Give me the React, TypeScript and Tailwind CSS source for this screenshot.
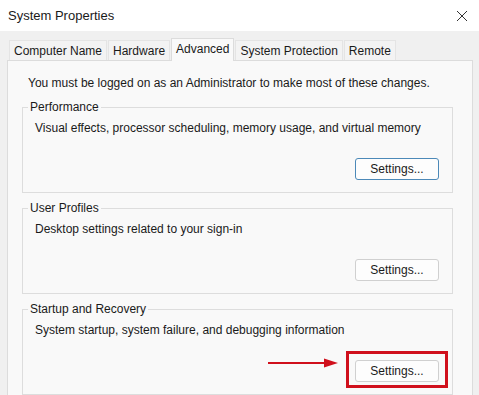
const tabs = ["Computer Name", "Hardware", "Advanced", "System Protection", "Remote"];

type GroupProps = {
  title: string;
  text: string;
  focused?: boolean;
  marked?: boolean;
};

const SettingsButton = ({ focused }: { focused?: boolean }) => (
  <button
    className={
      "h-[22px] w-[84px] rounded-[3px] bg-[#fdfdfd] text-[12px] leading-none text-[#1a1a1a] " +
      (focused ? "border-[1.5px] border-[#4c89b8]" : "border border-[#d0d0d0]")
    }
  >
    Settings...
  </button>
);

const Group = ({ title, text, focused, marked }: GroupProps) => (
  <fieldset className="ml-[14px] w-[431px] border border-[#dddddd] pb-[12px]">
    <legend className="ml-[5px] px-[2px] text-[12px] leading-[16px] text-[#1a1a1a]">{title}</legend>
    <div className="pl-[12px] pr-[13px]">
      <p className="pt-[5px] text-[12px] leading-[16px] text-[#1a1a1a]">{text}</p>
      <div className="mt-[20px] flex justify-end">
        <div className="relative">
          <SettingsButton focused={focused} />
          {marked && (
            <>
              <div className="pointer-events-none absolute -left-[9px] -right-[9px] -top-[7px] -bottom-[6px] border-[3px] border-[#d0101c]" />
              <svg
                className="absolute -left-[87px] -top-[1px]"
                width="72"
                height="12"
                viewBox="0 0 72 12"
              >
                <line x1="0" y1="6" x2="60" y2="6" stroke="#d0101c" strokeWidth="2.2" />
                <polygon points="56,1.5 70,6 56,10.5" fill="#d0101c" />
              </svg>
            </>
          )}
        </div>
      </div>
    </div>
  </fieldset>
);

export default function App() {
  return (
    <div
      className="h-[395px] w-[479px] overflow-hidden bg-[#f0f0f0] text-[#1a1a1a]"
      style={{ fontFamily: '"Liberation Sans", Arial, sans-serif' }}
    >
      <div className="flex h-[31px] items-center justify-between bg-white pl-[8px] pr-[11px]">
        <span className="text-[13px]">System Properties</span>
        <svg width="12" height="12" viewBox="0 0 12 12">
          <path d="M1 1 L11 11 M11 1 L1 11" stroke="#333" strokeWidth="1" fill="none" />
        </svg>
      </div>
      <div className="pl-[7px] pr-[6px] pt-[7px]">
        <div className="flex h-[22px] items-end gap-[1px] pl-[2px]">
          {tabs.map((t) => {
            const active = t === "Advanced";
            return (
              <div
                key={t}
                className={
                  "flex items-center border border-b-0 px-[4px] text-[12px] " +
                  (active
                    ? "relative z-10 -mb-px h-[23px] border-[#dcdcdc] bg-[#f9f9f9] pb-[3px]"
                    : "h-[20px] border-[#e4e4e4] bg-[#f3f3f3]")
                }
              >
                {t}
              </div>
            );
          })}
        </div>
        <div className="h-[400px] border border-[#dcdcdc] bg-[#f9f9f9] pt-[14px]">
          <p className="pl-[20px] text-[12px] leading-[16px]">
            You must be logged on as an Administrator to make most of these changes.
          </p>
          <div className="mt-[8px] flex flex-col gap-[7px]">
            <Group
              title="Performance"
              text="Visual effects, processor scheduling, memory usage, and virtual memory"
              focused
            />
            <Group title="User Profiles" text="Desktop settings related to your sign-in" />
            <Group
              title="Startup and Recovery"
              text="System startup, system failure, and debugging information"
              marked
            />
          </div>
        </div>
      </div>
    </div>
  );
}
